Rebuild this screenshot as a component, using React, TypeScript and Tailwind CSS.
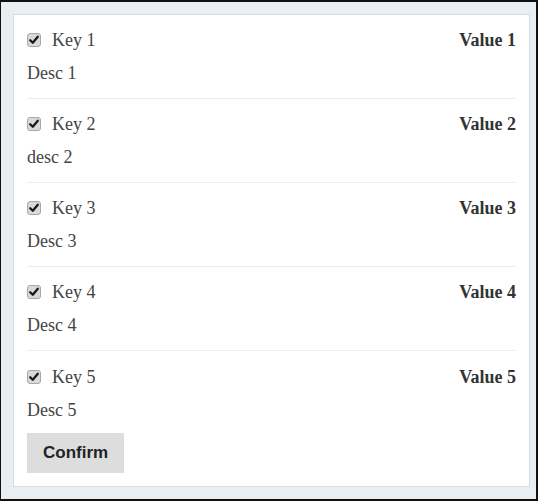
import React from "react";

const items = [
  { key: "Key 1", value: "Value 1", desc: "Desc 1" },
  { key: "Key 2", value: "Value 2", desc: "desc 2" },
  { key: "Key 3", value: "Value 3", desc: "Desc 3" },
  { key: "Key 4", value: "Value 4", desc: "Desc 4" },
  { key: "Key 5", value: "Value 5", desc: "Desc 5" },
];

function Check() {
  return (
    <svg width="14" height="14" viewBox="0 0 14 14" className="shrink-0">
      <rect x="0.5" y="0.5" width="13" height="13" rx="2.5" fill="#d9d9d9" stroke="#a8a8a8" />
      <path d="M3.2 7.2 L5.8 9.8 L10.8 3.8" fill="none" stroke="#1a1a1a" strokeWidth="2.3" strokeLinecap="round" strokeLinejoin="round" />
    </svg>
  );
}

export default function App() {
  return (
    <div
      className="w-[538px] h-[501px] bg-[#e9eef2] border-t-2 border-l border-r-2 border-b-2 border-[#111] pt-[12px] pl-[12px] pr-[6px]"
      style={{ fontFamily: '"Liberation Serif", "Times New Roman", serif' }}
    >
      <div className="bg-white border border-[#d3dde6] px-[13px] pb-[13px]">
        {items.map((it, i) => {
          const last = i === items.length - 1;
          return (
            <div
              key={it.key}
              className={
                last
                  ? "pt-[14px] pb-[11px]"
                  : "pt-[13px] pb-[13px] border-b border-[#ececec]"
              }
            >
              <div className="flex items-center h-[24px]">
                <Check />
                <span className="ml-[11px] text-[18px] leading-[24px] text-[#444]">{it.key}</span>
                <span className="ml-auto text-[18px] leading-[24px] font-bold text-[#333]">{it.value}</span>
              </div>
              <div className="mt-[9px] h-[24px] flex items-center text-[18px] leading-[24px] text-[#444]">{it.desc}</div>
            </div>
          );
        })}
        <button
          className="h-[40px] px-4 bg-[#dddddd] text-[17px] font-bold text-[#222]"
          style={{ fontFamily: '"Liberation Sans", Arial, sans-serif' }}
        >
          Confirm
        </button>
      </div>
    </div>
  );
}
